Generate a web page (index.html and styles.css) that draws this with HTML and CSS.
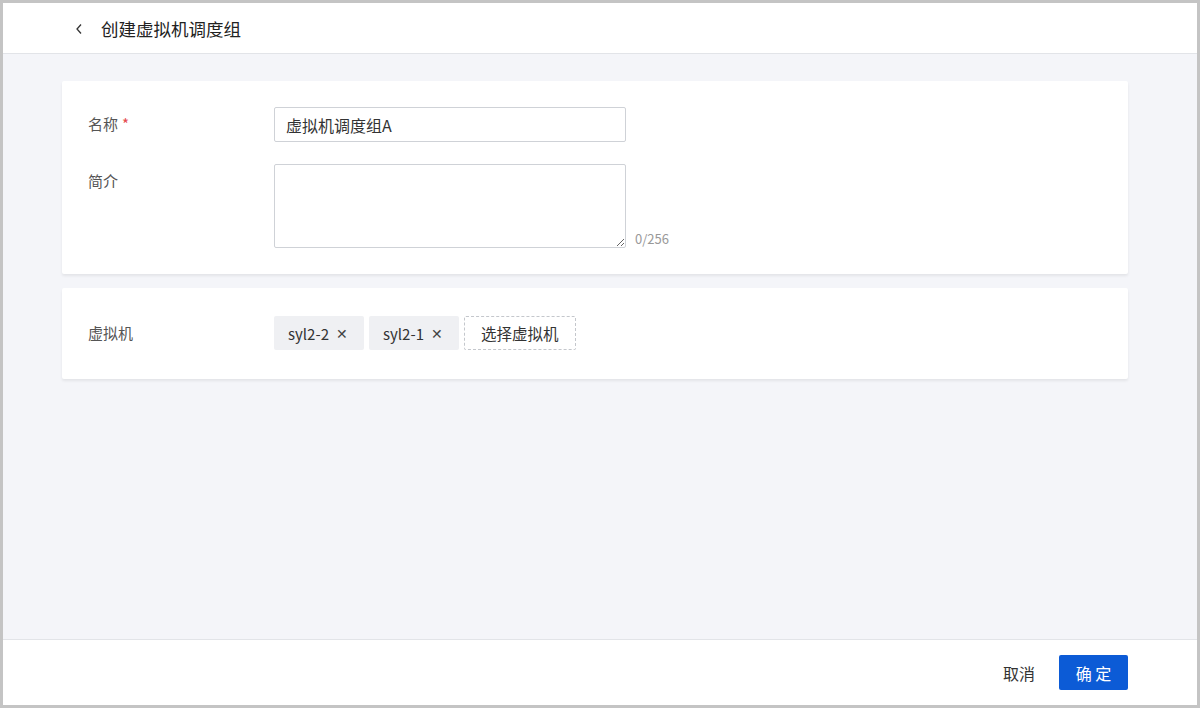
FILE: index.html
```html
<!DOCTYPE html>
<html lang="zh-CN">

<head>
    <meta charset="UTF-8">
    <meta name="viewport" content="width=device-width, initial-scale=1.0">
    <title>创建虚拟机调度组</title>
    <link rel="stylesheet" href="styles.css">
</head>

<body>

    <div class="page">
        <header class="topbar">
            <span class="back">
                <svg width="8" height="12" viewBox="0 0 8 12"><path d="M6 1.5L2 6l4 4.5" fill="none" stroke="#333" stroke-width="1.3"/></svg>
            </span>
            <h1>创建虚拟机调度组</h1>
        </header>

        <main class="content">
            <section class="card card-base">
                <div class="row">
                    <label class="label" for="nombre">名称<span class="req">*</span></label>
                    <input class="input" type="text" id="nombre" value="虚拟机调度组A">
                </div>
                <div class="row row-top">
                    <label class="label" for="desc">简介</label>
                    <textarea class="textarea" id="desc"></textarea>
                    <span class="count">0/256</span>
                </div>
            </section>

            <section class="card card-vm">
                <div class="row">
                    <span class="label">虚拟机</span>
                    <div class="tags">
                        <span class="tag">syl2-2 <i class="close">✕</i></span>
                        <span class="tag">syl2-1 <i class="close">✕</i></span>
                        <button class="pick">选择虚拟机</button>
                    </div>
                </div>
            </section>
        </main>

        <footer class="footer">
            <button class="btn btn-text">取消</button>
            <button class="btn btn-primary">确 定</button>
        </footer>
    </div>

</body>

</html>
```

FILE: styles.css
```css
* {
    box-sizing: border-box;
}

body {
    margin: 0;
    font-family: "Noto Sans CJK SC", "Noto Sans", sans-serif;
    background-color: #c4c4c4;
}

.page {
    height: 708px;
    border: 3px solid #c4c4c4;
    background-color: #f4f5f9;
    display: flex;
    flex-direction: column;
}

.topbar {
    height: 51px;
    background-color: #fff;
    border-bottom: 1px solid #e2e4e8;
    display: flex;
    align-items: center;
    padding-left: 70px;
}

.back {
    display: flex;
    width: 28px;
    padding-left: 2px;
    padding-top: 1px;
}

.topbar h1 {
    margin: 0;
    font-size: 17.5px;
    font-weight: normal;
    color: #222;
}

.content {
    flex: 1;
    padding: 27px 69px 0 59px;
}

.card {
    background-color: #fff;
    box-shadow: 0 2px 3px rgba(0, 0, 0, 0.07);
    border-radius: 2px;
    padding: 0 26px;
}

.card-base {
    padding-top: 26px;
    padding-bottom: 26px;
}

.card-vm {
    margin-top: 14px;
    padding-top: 28px;
    padding-bottom: 29px;
}

.row {
    display: flex;
    align-items: center;
}

.row-top {
    align-items: flex-start;
    margin-top: 22px;
}

.label {
    width: 186px;
    font-size: 15px;
    color: #555;
    padding-bottom: 2px;
}

.row-top .label {
    padding-top: 6px;
}

.req {
    color: #e5484d;
    margin-left: 4px;
}

.input {
    width: 352px;
    height: 35px;
    padding: 0 11px;
    border: 1px solid #cfd2d7;
    border-radius: 2px;
    font-family: inherit;
    font-size: 16px;
    color: #333;
    outline: none;
}

.textarea {
    width: 352px;
    height: 84px;
    border: 1px solid #cfd2d7;
    border-radius: 2px;
    font-family: inherit;
    outline: none;
}

.count {
    align-self: flex-end;
    margin-left: 9px;
    font-size: 13px;
    color: #999;
}

.tags {
    display: flex;
    gap: 5px;
}

.tag {
    height: 34px;
    width: 90px;
    padding-left: 14px;
    display: flex;
    align-items: center;
    background-color: #eff0f3;
    border-radius: 2px;
    font-size: 15px;
    color: #333;
}

.close {
    font-style: normal;
    font-size: 14px;
    margin-left: 7px;
    color: #444;
}

.pick {
    height: 34px;
    padding: 0 16px;
    background-color: #fff;
    border: 1px dashed #c4c7cc;
    border-radius: 2px;
    font-family: inherit;
    font-size: 15.5px;
    color: #333;
}

.footer {
    height: 66px;
    background-color: #fff;
    border-top: 1px solid #e2e4e8;
    display: flex;
    justify-content: flex-end;
    align-items: center;
    gap: 8px;
    padding-right: 69px;
}

.btn {
    height: 35px;
    font-family: inherit;
    font-size: 16px;
    border-radius: 2px;
    cursor: pointer;
}

.btn-text {
    background: none;
    border: none;
    color: #333;
    padding: 0 16px;
}

.btn-primary {
    width: 69px;
    background-color: #0c5bd6;
    border: none;
    color: #fff;
}
```
